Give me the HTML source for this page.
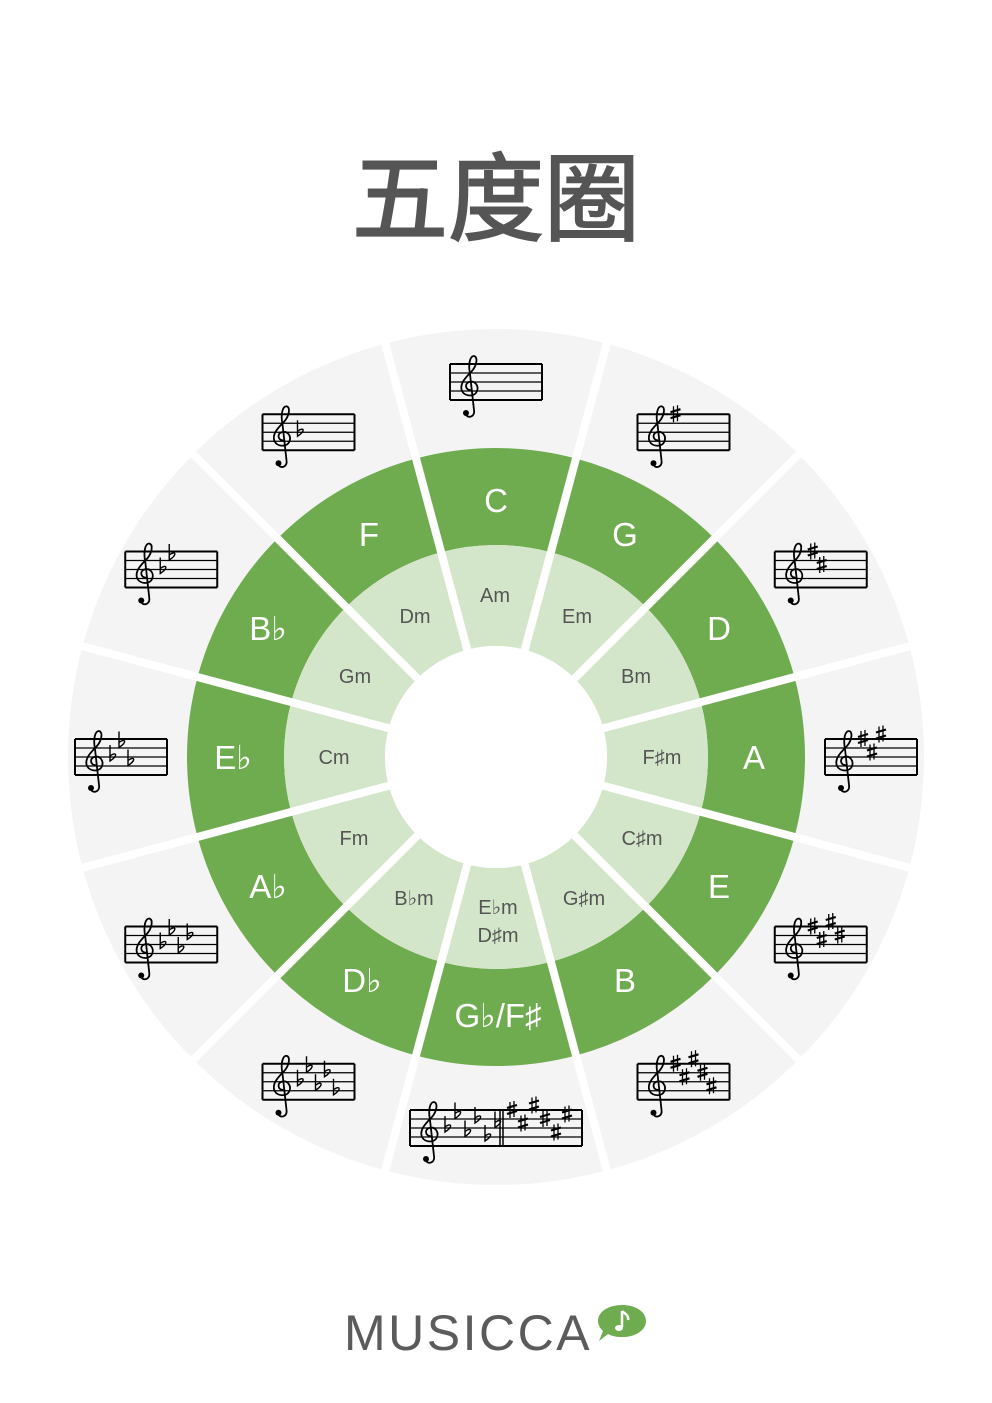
<!DOCTYPE html>
<html><head><meta charset="utf-8"><style>
html,body{margin:0;padding:0;background:#fff;}
body{width:992px;height:1403px;position:relative;overflow:hidden;}
.t{position:absolute;left:0;width:992px;top:132px;text-align:center;font:400 96px "Noto Sans CJK SC",sans-serif;color:#555;line-height:120px;-webkit-text-stroke:2px #555;}
.logo{position:absolute;left:344px;top:1304px;font:400 50px "Liberation Sans","DejaVu Sans",sans-serif;color:#5b5b5d;letter-spacing:2.5px;}
</style></head><body>
<div class="t">五度圈</div>
<svg id="s" width="992" height="1403" style="position:absolute;left:0;top:0">
<g id="rings"></g>
<circle cx="496" cy="757" r="111" fill="#fff"/>
<g id="staffs"></g>
<g font-family="'Liberation Sans','DejaVu Sans',sans-serif" font-size="33" fill="#fff" text-anchor="middle">
<text x="496" y="512">C</text><text x="625" y="546">G</text><text x="719" y="640">D</text><text x="754" y="769">A</text>
<text x="719" y="898">E</text><text x="625" y="992">B</text><text x="498" y="1027">G♭/F♯</text><text x="362" y="992">D♭</text>
<text x="268" y="898">A♭</text><text x="233" y="769">E♭</text><text x="268" y="640">B♭</text><text x="369" y="546">F</text>
</g>
<g font-family="'Liberation Sans','DejaVu Sans',sans-serif" font-size="20" fill="#555" text-anchor="middle">
<text x="495" y="602">Am</text><text x="577" y="623">Em</text><text x="636" y="683">Bm</text><text x="662" y="764">F♯m</text>
<text x="642" y="845">C♯m</text><text x="584" y="905">G♯m</text><text x="498" y="914">E♭m</text><text x="498" y="942">D♯m</text>
<text x="414" y="905">B♭m</text><text x="354" y="845">Fm</text><text x="334" y="764">Cm</text><text x="355" y="683">Gm</text><text x="415" y="623">Dm</text>
</g>
<g transform="translate(598,1305)">
<path d="M24,0 C38,0 48,7 48,16 C48,25 38,32 24,32 C18,32 14,31 10,29 L1,36 L5,26 C2,23 0,20 0,16 C0,7 10,0 24,0Z" fill="#6fac50"/>
<path d="M24,6 L24,22 M24,6 C27,9 31,10 30,15" stroke="#fff" stroke-width="2.5" fill="none"/>
<ellipse cx="21" cy="23" rx="4" ry="3" fill="#fff"/>
</g>
</svg>
<div class="logo">MUSICCA</div>
<script>
var NS="http://www.w3.org/2000/svg",cx=496,cy=757;
function el(n,a,p){var e=document.createElementNS(NS,n);for(var k in a)e.setAttribute(k,a[k]);p.appendChild(e);return e;}
function pt(r,a){a=(a-90)*Math.PI/180;return [cx+r*Math.cos(a),cy+r*Math.sin(a)];}
function sec(r1,r2,a1,a2){var p1=pt(r2,a1),p2=pt(r2,a2),p3=pt(r1,a2),p4=pt(r1,a1);
return "M"+p1+" A"+r2+","+r2+" 0 0 1 "+p2+" L"+p3+" A"+r1+","+r1+" 0 0 0 "+p4+"Z";}
var R=document.getElementById("rings");
for(var i=0;i<12;i++){var a=i*30-15,b=i*30+15;
el("path",{d:sec(309,428,a,b),fill:"#f4f4f4"},R);
el("path",{d:sec(212,309,a,b),fill:"#6fac50"},R);
el("path",{d:sec(111,212,a,b),fill:"#d4e6c9"},R);}
for(var i=0;i<12;i++){var p=pt(440,i*30+15);el("line",{x1:cx,y1:cy,x2:p[0],y2:p[1],stroke:"#fff","stroke-width":8},R);}
var S=document.getElementById("staffs");
var sh=[0,13.5,-4.5,9,22.5,4.5,18],fl=[18,4.5,22.5,9,27,13.5,31.5];
function sharp(x,y,g){el("path",{d:"M"+(x-2)+","+(y-8)+"v16M"+(x+2)+","+(y-9)+"v16",stroke:"#000","stroke-width":1.3},g);
el("path",{d:"M"+(x-5)+","+(y-2)+"l10,-3M"+(x-5)+","+(y+4)+"l10,-3",stroke:"#000","stroke-width":2.2},g);}
function flat(x,y,g){el("path",{d:"M"+(x-3)+","+(y-12)+"v16 C"+(x+5)+","+(y-1)+" "+(x+4)+","+(y-6)+" "+(x-3)+","+(y-1),stroke:"#000","stroke-width":1.4,fill:"none"},g);}
function clef(x,y,g){var gg=el("g",{transform:"translate("+x+","+y+")"},g);
el("path",{d:"M2,8 c-4,0 -6,-6 -1,-8 c6,-2 10,4 8,9 c-2,6 -12,6 -15,0 c-3,-7 4,-14 10,-20 c5,-6 6,-14 2,-15 c-4,0 -6,8 -4,18 L6,28 c1,6 -4,8 -7,6",stroke:"#000","stroke-width":1.8,fill:"none","stroke-linecap":"round"},gg);
el("circle",{cx:-2,cy:31,r:3},gg);}
function staff(x0,y,w,g){for(var j=0;j<5;j++)el("line",{x1:x0,x2:x0+w,y1:y-18+9*j,y2:y-18+9*j,stroke:"#000","stroke-width":(j==0||j==4)?2:1.2},g);
el("line",{x1:x0,x2:x0,y1:y-18,y2:y+18,stroke:"#000","stroke-width":2},g);el("line",{x1:x0+w,x2:x0+w,y1:y-18,y2:y+18,stroke:"#000","stroke-width":2},g);}
var keys=[[0,0],[1,1],[2,1],[3,1],[4,1],[5,1],[0,2],[5,-1],[4,-1],[3,-1],[2,-1],[1,-1]];
for(var i=0;i<12;i++){if(i==6)continue;var p=pt(375,i*30);var n=keys[i][0],t=keys[i][1];
var x0=p[0]-46,y=p[1];staff(x0,y,92,S);clef(x0+18,y,S);
for(var k=0;k<n;k++){var xx=x0+38+k*9; if(t>0)sharp(xx,y-18+sh[k],S);else flat(xx,y-18+fl[k],S);}}
var x0=410,y=1128;staff(x0,y,172,S);clef(x0+18,y,S);
for(var k=0;k<6;k++)flat(x0+38+k*10,y-18+fl[k],S);
el("line",{x1:500,x2:500,y1:y-18,y2:y+18,stroke:"#000","stroke-width":1.5},S);
el("line",{x1:503,x2:503,y1:y-18,y2:y+18,stroke:"#000","stroke-width":1.5},S);
for(var k=0;k<6;k++)sharp(512+k*11,y-18+sh[k],S);
</script>
</body></html>
